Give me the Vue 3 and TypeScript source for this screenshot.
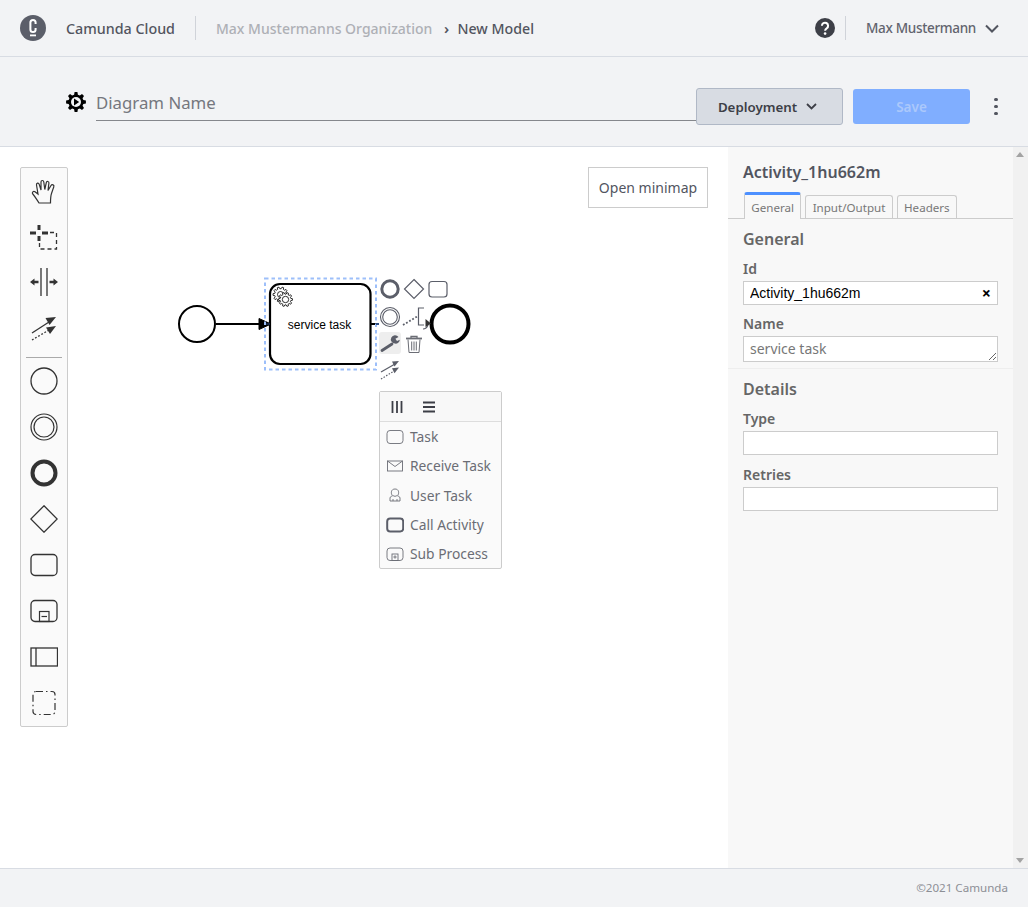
<template>
  <div class="app">
    <header class="topbar">
      <svg class="logo" width="26" height="26" viewBox="0 0 26 26">
        <circle cx="13" cy="13" r="13" fill="#5b5e69" />
        <path d="M15.600 9V7.500a2.600 2.600 0 0 0-5.200 0v7a2.600 2.600 0 0 0 5.200 0V13" fill="none" stroke="#fff" stroke-width="2" />
        <rect x="10" y="19.500" width="6" height="1.800" fill="#fff" />
      </svg>
      <span class="brand">Camunda Cloud</span>
      <span class="vline crumb-line"></span>
      <span class="crumb">Max Mustermanns Organization</span>
      <span class="crumb-sep">›</span>
      <span class="crumb-now">New Model</span>
      <svg class="help" width="20" height="20" viewBox="0 0 20 20">
        <circle cx="10" cy="10" r="10" fill="#3d3f47" />
        <path d="M6.900 7.800a3.100 3.100 0 1 1 4.900 2.500c-1.100.8-1.700 1.200-1.700 2.500" fill="none" stroke="#fff" stroke-width="2" />
        <circle cx="10.100" cy="15.600" r="1.300" fill="#fff" />
      </svg>
      <span class="vline user-line"></span>
      <span class="user">Max Mustermann</span>
      <svg class="user-chev" width="14" height="9" viewBox="0 0 14 9"><path d="M1 1.500l6 6 6-6" fill="none" stroke="#52555f" stroke-width="2" /></svg>
    </header>

    <div class="toolbar">
      <svg class="diagram-gear" width="20" height="20" viewBox="0 0 20 20">
        <path :d="gearPath(10, 10, 10, 7.600, 8)" fill="#000" />
        <circle cx="10" cy="10" r="5" fill="#f2f3f5" />
        <path d="M8 6.400l5.200 3.600L8 13.600z" fill="#000" />
      </svg>
      <input class="diagram-name" placeholder="Diagram Name" />
      <button class="deploy">
        Deployment
        <svg width="11" height="7" viewBox="0 0 11 7"><path d="M1 1l4.500 4.500L10 1" fill="none" stroke="#3d3f47" stroke-width="1.800" /></svg>
      </button>
      <button class="save">Save</button>
      <div class="kebab"><i></i><i></i><i></i></div>
    </div>

    <main class="main">
      <section class="canvas">
        <svg class="diagram" width="728" height="721" viewBox="0 147 728 721">
          <circle cx="197" cy="324" r="18" fill="#fff" stroke="#000" stroke-width="2" />
          <path d="M216 324h46" stroke="#000" stroke-width="2" />
          <path d="M259 318.500l12 5.500-12 5.500z" fill="#000" stroke="#000" />
          <path d="M371 324h8" stroke="#000" stroke-width="2" />

          <rect x="265" y="278.500" width="111" height="91" fill="none" stroke="#9dbffa" stroke-width="2" stroke-dasharray="3.500 3" />
          <rect x="270" y="284" width="100.500" height="80" rx="10" fill="#fff" stroke="#000" stroke-width="2.200" />
          <path d="M376 324h3" stroke="#2a4a80" stroke-width="2" />
          <path d="M266 324h4" stroke="#2a4a80" stroke-width="1" />

          <path :d="gearPath(280.500, 294.500, 7.500, 5.800, 10)" fill="#fff" stroke="#000" stroke-width=".8" />
          <circle cx="280.500" cy="294.500" r="3" fill="#fff" stroke="#000" stroke-width=".8" />
          <path :d="gearPath(285.500, 299.500, 7, 5.400, 10)" fill="#fff" stroke="#000" stroke-width=".8" />
          <circle cx="285.500" cy="299.500" r="3.200" fill="#fff" stroke="#000" stroke-width=".8" />
          <text x="319.500" y="328.500" class="task-label" text-anchor="middle">service task</text>

          <circle cx="450" cy="324" r="18.500" fill="#fff" stroke="#000" stroke-width="4" />

          <!-- context pad -->
          <g fill="none" stroke="#5b5e69">
            <circle cx="390" cy="289" r="8.200" stroke-width="3" />
            <path d="M414 279.500l9.500 9.500-9.500 9.500-9.500-9.500z" stroke-width="1.200" />
            <rect x="429" y="281.500" width="18" height="15.500" rx="3" stroke-width="1.200" />
            <circle cx="390" cy="317" r="9.500" stroke-width="1.100" />
            <circle cx="390" cy="317" r="7.300" stroke-width="1.100" />
            <path d="M403 325l15-9" stroke-width="1.800" stroke-dasharray="1.800 1.800" />
            <path d="M424 308h-5.500v17h5.500" stroke-width="1.200" />
            <path d="M423 329c2.500 0 4-1.500 5-4" stroke-width="1.200" />
          </g>
          <path d="M425.500 319l5.500 4.500-5.500 3.500z" fill="#333" />
          <rect x="379" y="332" width="22" height="22" rx="3" fill="#eee" />
          <path d="M382 350.500l10-6.500" stroke="#5b5e69" stroke-width="2.800" stroke-linecap="round" fill="none" />
          <path d="M398.500 337a4.200 4.200 0 1 0-3.500 6.600 4.200 4.200 0 0 0 4.800-3.800l-2.800 1.200-1.600-2.200z" fill="#5b5e69" />
          <g fill="none" stroke="#6b6d75" stroke-width="1">
            <path d="M406 338.500h16" stroke-width="1.800" />
            <path d="M411 338v-1.500h6v1.500" stroke-width="1.300" />
            <path d="M408 339.500l1 13h10l1-13" />
            <path d="M411.700 341.500v9M414 341.500v9M416.300 341.500v9" />
          </g>
          <path d="M381 372l14-8" stroke="#5b5e69" stroke-width="1.200" />
          <path d="M399 361l-7 .5 2.500 5z" fill="#5b5e69" />
          <path d="M381 379l14-8.500" stroke="#5b5e69" stroke-width="1.200" stroke-dasharray="1.500 1.500" />
          <path d="M399 367.500l-7 .8 2.500 5z" fill="#5b5e69" />
        </svg>

        <div class="palette">
          <div class="tool">
            <svg viewBox="0 0 28 28"><path d="M9 27C7 24 5 20.500 2.800 18c-1.300-1.500.7-3.500 2.200-2.300L8 18 6.500 9C6.100 7 8.600 6.300 9.200 8.300L11 14V6c0-2 2.600-2 2.800 0l1 7.500 1.500-6.900c.4-1.800 2.900-1.400 2.600.6l-.9 7.300 3-5c1-1.500 3.500-.5 2.800 1.300l-2.300 6.700c-.7 2-1 4.500-1 9.500z" fill="none" stroke="#333" stroke-width="1.200" /></svg>
          </div>
          <div class="tool">
            <svg viewBox="0 0 28 28"><path d="M0 11h6M12 11h6M9 3v5M9 14v5" stroke="#333" stroke-width="3" /><path d="M20 10.500h6.500v16.500H9.500v-6" fill="none" stroke="#333" stroke-width="1.300" stroke-dasharray="4 3" /></svg>
          </div>
          <div class="tool">
            <svg viewBox="0 0 28 28"><path d="M11 0v28M17 0v28" stroke="#333" stroke-width="1.300" /><path d="M0 14l4.500-3.500v2.300h4v2.400h-4v2.300zM28 14l-4.500-3.500v2.300h-4v2.400h4v2.300z" fill="#333" /></svg>
          </div>
          <div class="tool">
            <svg viewBox="0 0 28 28"><path d="M2 19l17-11" stroke="#333" stroke-width="1.300" /><path d="M26 3l-10.500 1 4 7z" fill="#333" /><path d="M2 26l17-10" stroke="#333" stroke-width="1.300" stroke-dasharray="1.800 1.800" /><path d="M26 12l-10 1.500 4 6.500z" fill="#333" /></svg>
          </div>
          <div class="sep"></div>
          <div class="tool">
            <svg viewBox="0 0 28 28"><circle cx="14" cy="14" r="13" fill="none" stroke="#333" stroke-width="1.300" /></svg>
          </div>
          <div class="tool">
            <svg viewBox="0 0 28 28"><circle cx="14" cy="14" r="13" fill="none" stroke="#333" stroke-width="1.200" /><circle cx="14" cy="14" r="10" fill="none" stroke="#333" stroke-width="1.200" /></svg>
          </div>
          <div class="tool">
            <svg viewBox="0 0 28 28"><circle cx="14" cy="14" r="11.500" fill="none" stroke="#333" stroke-width="4" /></svg>
          </div>
          <div class="tool">
            <svg viewBox="0 0 28 28"><path d="M14 .800L27.200 14 14 27.200.800 14z" fill="none" stroke="#333" stroke-width="1.300" /></svg>
          </div>
          <div class="tool">
            <svg viewBox="0 0 28 28"><rect x="1" y="3.500" width="26" height="21" rx="4" fill="none" stroke="#333" stroke-width="1.300" /></svg>
          </div>
          <div class="tool">
            <svg viewBox="0 0 28 28"><rect x="1" y="3.500" width="26" height="21" rx="4" fill="none" stroke="#333" stroke-width="1.300" /><rect x="9.500" y="14.500" width="9.500" height="10" fill="none" stroke="#333" stroke-width="1.200" /><path d="M11.500 19.500h5.500" stroke="#333" stroke-width="1.200" /></svg>
          </div>
          <div class="tool">
            <svg viewBox="0 0 28 28"><rect x="1" y="5" width="26.500" height="18" fill="none" stroke="#333" stroke-width="1.300" /><path d="M6 5v18" stroke="#333" stroke-width="1.300" /></svg>
          </div>
          <div class="tool">
            <svg viewBox="0 0 28 28"><rect x="3" y="2.500" width="22" height="23" rx="3" fill="none" stroke="#333" stroke-width="1.200" stroke-dasharray="7 3 1.500 3" /></svg>
          </div>
        </div>

        <button class="minimap">Open minimap</button>

        <div class="popup">
          <div class="popup-head">
            <svg width="12" height="12" viewBox="0 0 12 12"><path d="M1.500 0v12M6 0v12M10.500 0v12" stroke="#3d3f47" stroke-width="1.800" /></svg>
            <svg width="12" height="12" viewBox="0 0 12 12"><path d="M0 1.500h12M0 6h12M0 10.500h12" stroke="#3d3f47" stroke-width="1.800" /></svg>
          </div>
          <div class="popup-item" v-for="item in menuItems" :key="item">
            <svg width="18" height="16" viewBox="0 0 18 16" fill="none" stroke="#6b6d75" stroke-width=".9">
              <rect v-if="item === 'Task'" x="1" y="1.500" width="16" height="13" rx="3" />
              <template v-else-if="item === 'Receive Task'">
                <rect x="1.500" y="3" width="15" height="10" />
                <path d="M1.500 3L9 8.500 16.500 3" />
              </template>
              <template v-else-if="item === 'User Task'">
                <path d="M6 8c-1.200-2-1-6 3-6s4.200 4 3 6" />
                <path d="M4 14v-3c0-1.500 2-2 3-2.500 1 1 3 1 4 0 1 .5 3 1 3 2.500v3z" />
                <path d="M7 14v-2M11 14v-2" />
              </template>
              <rect v-else-if="item === 'Call Activity'" x="1.200" y="1.500" width="16" height="13" rx="3" stroke="#5b5e69" stroke-width="2" />
              <template v-else>
                <rect x="1" y="2" width="16" height="12.500" rx="3" />
                <rect x="6" y="8" width="6" height="6.500" />
                <path d="M7.300 11h3.400M9 9.300v3.400" />
              </template>
            </svg>
            <span>{{ item }}</span>
          </div>
        </div>
      </section>

      <aside class="side">
        <div class="panel">
          <h2 class="panel-title">Activity_1hu662m</h2>
          <div class="tabs">
            <div class="tab active">General</div>
            <div class="tab">Input/Output</div>
            <div class="tab">Headers</div>
          </div>
          <div class="group first">
            <h3>General</h3>
            <label>Id</label>
            <div class="id-field">
              <input value="Activity_1hu662m" />
              <span class="clear">×</span>
            </div>
            <label>Name</label>
            <textarea class="name-field">service task</textarea>
          </div>
          <div class="group">
            <h3>Details</h3>
            <label>Type</label>
            <input class="plain" />
            <label>Retries</label>
            <input class="plain" />
          </div>
        </div>
        <div class="scroll">
          <span class="up"></span>
          <span class="down"></span>
        </div>
      </aside>
    </main>

    <footer class="footer">©2021 Camunda</footer>
  </div>
</template>

<script setup lang="ts">
const menuItems: string[] = ['Task', 'Receive Task', 'User Task', 'Call Activity', 'Sub Process']

// toothed ring, used for the diagram icon and the service task marker
function gearPath(cx: number, cy: number, outer: number, inner: number, teeth: number): string {
  const step = (Math.PI * 2) / teeth
  const pts: string[] = []
  for (let i = 0; i < teeth; i++) {
    const a = i * step
    const corners: [number, number][] = [
      [inner, a - step * 0.32],
      [outer, a - step * 0.18],
      [outer, a + step * 0.18],
      [inner, a + step * 0.32],
    ]
    for (const [r, t] of corners) {
      pts.push(`${(cx + r * Math.cos(t)).toFixed(2)} ${(cy + r * Math.sin(t)).toFixed(2)}`)
    }
  }
  return `M${pts.join('L')}Z`
}
</script>

<style>
html,
body {
  margin: 0;
  background: #fff;
}
</style>

<style scoped>
.app {
  width: 1028px;
  height: 907px;
  display: flex;
  flex-direction: column;
  overflow: hidden;
  font-family: "Noto Sans", "Open Sans", sans-serif;
  color: #52555f;
}

.topbar {
  height: 56px;
  flex: none;
  display: flex;
  align-items: center;
  background: #f2f3f5;
  border-bottom: 1px solid #d8dce3;
  padding-left: 20px;
}
.brand {
  margin-left: 20px;
  font-size: 14.300px;
  font-weight: 500;
  width: 109px;
  white-space: nowrap;
}
.vline {
  width: 1px;
  height: 24px;
  background: #d0d3d9;
}
.crumb-line {
  margin-left: 20px;
}
.crumb {
  margin-left: 20px;
  font-size: 14px;
  font-weight: 500;
  color: #aeb0b6;
  width: 218px;
  white-space: nowrap;
}
.crumb-sep {
  margin-left: 10px;
  font-size: 15px;
  font-weight: 600;
  width: 13.500px;
}
.crumb-now {
  font-size: 14.200px;
  font-weight: 500;
}
.help {
  margin-left: auto;
}
.user-line {
  margin-left: 10px;
}
.user {
  margin-left: 20px;
  font-size: 13.500px;
  letter-spacing: -0.32px;
  font-weight: 500;
  color: #62646e;
}
.user-chev {
  margin-left: 9px;
  margin-right: 29px;
}

.toolbar {
  height: 90px;
  box-sizing: border-box;
  flex: none;
  display: flex;
  align-items: center;
  background: #f2f3f5;
  border-bottom: 1px solid #d8dce3;
  padding: 10px 0 0 66px;
}
.diagram-gear {
  margin-right: 10px;
  margin-top: -9px;
}
.diagram-name {
  width: 600px;
  height: 36px;
  box-sizing: border-box;
  margin-top: -8px;
  border: 0;
  border-bottom: 1px solid #85878c;
  background: transparent;
  padding: 0;
  font-family: inherit;
  font-size: 16.800px;
  outline: none;
}
.diagram-name::placeholder {
  color: #75777e;
  opacity: 1;
}
.deploy {
  width: 147px;
  height: 37px;
  box-sizing: border-box;
  display: flex;
  align-items: center;
  justify-content: center;
  gap: 9px;
  padding: 0 4px 0 0;
  background: #d8dce3;
  border: 1px solid #b0b8c6;
  border-radius: 3px;
  font-family: inherit;
  font-size: 13.300px;
  font-weight: 600;
  color: #3d3f47;
}
.save {
  width: 117px;
  height: 35px;
  margin-left: 10px;
  background: #80aeff;
  border: 0;
  border-radius: 3px;
  font-family: inherit;
  font-size: 13.500px;
  font-weight: 600;
  color: #abc8fb;
  padding: 0;
}
.kebab {
  margin-left: 24px;
  display: flex;
  flex-direction: column;
  gap: 3.500px;
}
.kebab i {
  width: 3.500px;
  height: 3.500px;
  border-radius: 50%;
  background: #52555f;
}

.main {
  flex: 1;
  min-height: 0;
  display: flex;
}
.canvas {
  position: relative;
  width: 728px;
  flex: none;
  background: #fff;
}
.diagram {
  position: absolute;
  left: 0;
  top: 0;
}
.task-label {
  font-family: "Liberation Sans", Arial, sans-serif;
  font-size: 12px;
  fill: #000;
}

.palette {
  position: absolute;
  left: 20px;
  top: 20px;
  width: 46px;
  height: 558px;
  background: #fafafa;
  border: 1px solid #ccc;
  border-radius: 2px;
}
.tool {
  height: 46px;
  display: flex;
  align-items: center;
  justify-content: center;
}
.tool:first-child {
  margin-top: -1px;
}
.tool svg {
  width: 28px;
  height: 28px;
}
.sep {
  height: 1px;
  margin: 6px 5px 0;
  background: #aaa;
}

.minimap {
  position: absolute;
  left: 588px;
  top: 20px;
  width: 120px;
  height: 41px;
  padding: 0;
  background: #fff;
  border: 1px solid #ccc;
  font-family: inherit;
  font-size: 14px;
  color: #52555f;
}

.popup {
  position: absolute;
  left: 379px;
  top: 244px;
  width: 121px;
  background: #fafafa;
  border: 1px solid #ccc;
  border-radius: 2px;
}
.popup-head {
  height: 29px;
  display: flex;
  align-items: center;
  gap: 20px;
  padding-left: 11px;
  background: #f8f8f8;
  border-bottom: 1px solid #ddd;
}
.popup-item {
  height: 29.300px;
  display: flex;
  align-items: center;
  gap: 6px;
  padding-left: 6px;
  font-size: 13.800px;
  color: #6b6d75;
}

.side {
  flex: 1;
  display: flex;
  min-width: 0;
}
.panel {
  flex: 1;
  background: #f8f8f8;
  color: #666;
}
.panel-title {
  margin: 0;
  padding: 14px 0 0 15px;
  height: 31px;
  font-size: 16px;
  line-height: 22px;
  font-weight: 600;
  color: #52555f;
}
.tabs {
  display: flex;
  align-items: flex-end;
  gap: 4px;
  height: 26px;
  padding-left: 16px;
  border-bottom: 1px solid #ccc;
}
.tab {
  height: 23px;
  box-sizing: border-box;
  border: 1px solid #ccc;
  border-bottom: 0;
  border-radius: 3px 3px 0 0;
  padding: 0 6.300px;
  font-size: 11.600px;
  line-height: 24px;
  color: #777;
}
.tab.active {
  height: 27px;
  border-top: 3px solid #4d90ff;
  line-height: 25px;
  background: #f8f8f8;
  margin-bottom: -1px;
}
.group {
  padding: 9px 15px 0;
}
.group.first {
  height: 150px;
  box-sizing: border-box;
  border-bottom: 1px solid #eee;
}
.group h3 {
  margin: 0;
  font-size: 16px;
  line-height: 22px;
  font-weight: 600;
  color: #666;
}
.group label {
  display: block;
  margin-top: 9px;
  height: 22px;
  font-size: 14px;
  line-height: 20px;
  font-weight: 600;
  color: #666;
}
.id-field {
  position: relative;
  height: 24px;
  width: 255px;
}
.id-field input {
  width: 100%;
  height: 100%;
  box-sizing: border-box;
  border: 1px solid #ccc;
  background: #fff;
  padding: 0 6px;
  font-family: "Liberation Sans", Arial, sans-serif;
  font-size: 14px;
  color: #000;
  outline: none;
}
.clear {
  position: absolute;
  right: 7px;
  top: 2px;
  font-size: 16px;
  line-height: 20px;
  font-weight: 700;
  color: #000;
}
.name-field {
  display: block;
  width: 255px;
  height: 26px;
  box-sizing: border-box;
  border: 1px solid #ccc;
  background: #fff;
  padding: 2px 6px;
  margin: 0;
  font-family: inherit;
  font-size: 14px;
  line-height: 20px;
  color: #777;
  outline: none;
  overflow: hidden;
}
.plain {
  display: block;
  width: 255px;
  height: 24px;
  box-sizing: border-box;
  border: 1px solid #ccc;
  background: #fff;
  margin-bottom: 10px;
  outline: none;
}
.plain + label {
  margin-top: 0;
}

.scroll {
  width: 15px;
  flex: none;
  position: relative;
  background: #f1f1f1;
}
.scroll span {
  position: absolute;
  left: 3px;
  width: 0;
  height: 0;
  border-left: 4px solid transparent;
  border-right: 4px solid transparent;
}
.scroll .up {
  top: 5px;
  border-bottom: 5px solid #a3a3a3;
}
.scroll .down {
  bottom: 5px;
  border-top: 5px solid #a3a3a3;
}

.footer {
  height: 39px;
  flex: none;
  box-sizing: border-box;
  background: #f2f3f5;
  border-top: 1px solid #d8dce3;
  padding-right: 20px;
  text-align: right;
  font-size: 11.600px;
  line-height: 38px;
  color: #8d8f96;
}
</style>
